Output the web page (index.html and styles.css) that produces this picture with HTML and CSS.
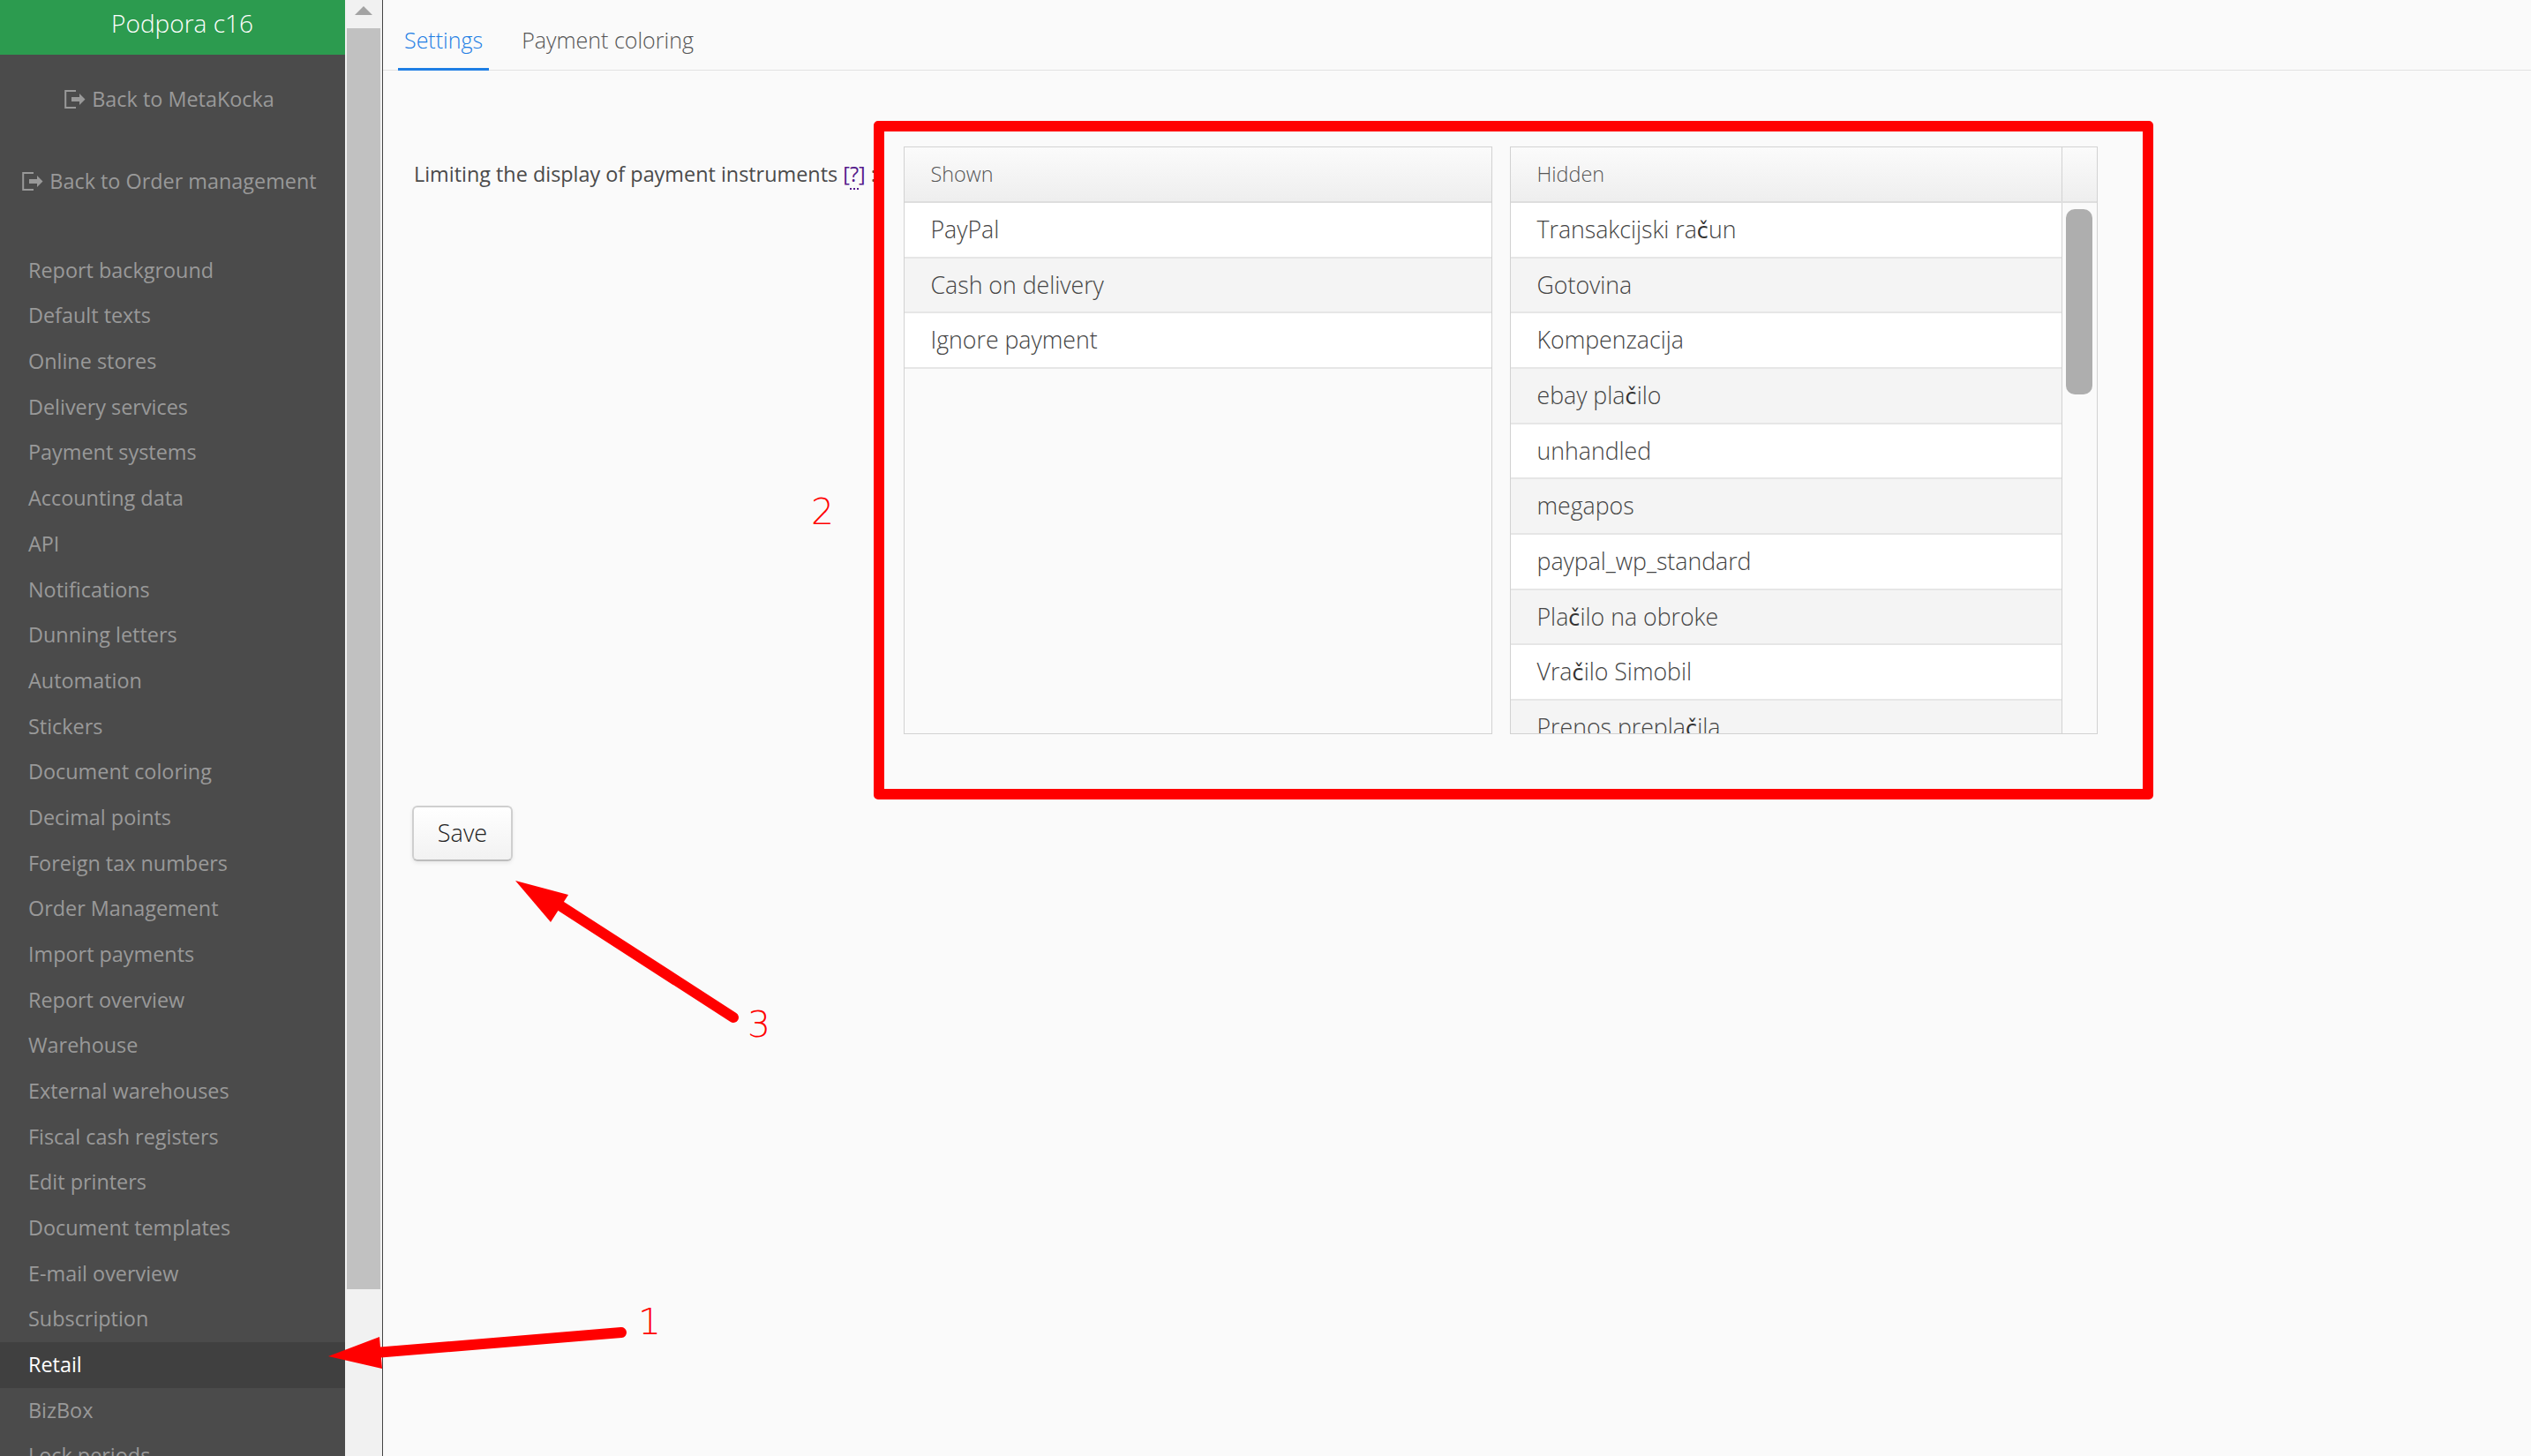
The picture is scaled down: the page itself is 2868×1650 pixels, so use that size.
FILE: index.html
```html
<!DOCTYPE html>
<html lang="en">
<head>
<meta charset="utf-8">
<title>Retail settings</title>
<link rel="stylesheet" href="styles.css">
</head>
<body>
<div class="app">
  <aside class="sidebar">
    <div class="brand">Podpora c16</div>
    <a class="back first"><svg class="back-icon" viewBox="0 0 24 21"><path d="M13 1H1.2V20H13" fill="none" stroke="#999" stroke-width="2"/><path d="M8 8H17V4L23.5 10.5L17 17V13H8Z" fill="#999"/></svg>Back to MetaKocka</a>
    <a class="back"><svg class="back-icon" viewBox="0 0 24 21"><path d="M13 1H1.2V20H13" fill="none" stroke="#999" stroke-width="2"/><path d="M8 8H17V4L23.5 10.5L17 17V13H8Z" fill="#999"/></svg>Back to Order management</a>
    <nav class="nav">
      <a>Report background</a>
      <a>Default texts</a>
      <a>Online stores</a>
      <a>Delivery services</a>
      <a>Payment systems</a>
      <a>Accounting data</a>
      <a>API</a>
      <a>Notifications</a>
      <a>Dunning letters</a>
      <a>Automation</a>
      <a>Stickers</a>
      <a>Document coloring</a>
      <a>Decimal points</a>
      <a>Foreign tax numbers</a>
      <a>Order Management</a>
      <a>Import payments</a>
      <a>Report overview</a>
      <a>Warehouse</a>
      <a>External warehouses</a>
      <a>Fiscal cash registers</a>
      <a>Edit printers</a>
      <a>Document templates</a>
      <a>E-mail overview</a>
      <a>Subscription</a>
      <a class="active">Retail</a>
      <a>BizBox</a>
      <a>Lock periods</a>
    </nav>
  </aside>
  <div class="side-scroll">
    <span class="side-arrow"></span>
    <div class="side-thumb"></div>
  </div>
  <main class="main">
    <div class="tabs">
      <a class="tab current">Settings</a>
      <a class="tab">Payment coloring</a>
    </div>
    <div class="form-row">
      <div class="form-label">Limiting the display of payment instruments <a class="help">[<span class="help-q">?</span>]</a> :</div>
      <div class="lists">
        <section class="list shown">
          <header class="list-head"><div class="head-title">Shown</div></header>
          <div class="list-body">
            <div class="rows">
              <div class="row">PayPal</div>
              <div class="row">Cash on delivery</div>
              <div class="row">Ignore payment</div>
            </div>
          </div>
        </section>
        <section class="list hidden-list">
          <header class="list-head"><div class="head-title">Hidden</div><div class="head-corner"></div></header>
          <div class="list-body">
            <div class="rows">
              <div class="row">Transakcijski ra<span class="fb">č</span>un</div>
              <div class="row">Gotovina</div>
              <div class="row">Kompenzacija</div>
              <div class="row">ebay pla<span class="fb">č</span>ilo</div>
              <div class="row">unhandled</div>
              <div class="row">megapos</div>
              <div class="row">paypal_wp_standard</div>
              <div class="row">Pla<span class="fb">č</span>ilo na obroke</div>
              <div class="row">Vra<span class="fb">č</span>ilo Simobil</div>
              <div class="row">Prenos prepla<span class="fb">č</span>ila</div>
            </div>
            <div class="gutter"><div class="gutter-thumb"></div></div>
          </div>
        </section>
      </div>
    </div>
    <button class="save">Save</button>
  </main>
</div>
<div class="annotations">
  <div class="red-box"></div>
  <svg class="arrows" viewBox="0 0 2868 1650">
    <line x1="704" y1="1510" x2="425" y2="1533" stroke="#f00" stroke-width="12" stroke-linecap="round"/>
    <polygon points="372,1537 430,1515 433,1551" fill="#f00"/>
    <line x1="831" y1="1153" x2="628" y2="1022" stroke="#f00" stroke-width="12" stroke-linecap="round"/>
    <polygon points="584,998 644,1014 624,1045" fill="#f00"/>
  </svg>
  <span class="num num1">1</span>
  <span class="num num2">2</span>
  <span class="num num3">3</span>
</div>
</body>
</html>
```
FILE: styles.css
```css
* { box-sizing: border-box; }
html, body { margin: 0; height: 100%; overflow: hidden; }
body { font-family: "Open Sans", "Liberation Sans", sans-serif; background: #fafafa; color: #444; position: relative; }

.app { display: flex; height: 1650px; overflow: hidden; }

.sidebar { width: 391px; flex: none; background: #4b4b4b; color: #999; font-size: 23.4px; overflow: hidden; }
.brand { height: 62px; background: #2c9b4f; color: #fff; font-size: 28px; font-weight: 300; line-height: 52px; text-align: center; padding-left: 22px; }
.back { display: flex; align-items: center; justify-content: center; height: 93px; padding-right: 7px; }
.back.first { margin-top: 3.5px; }
.back-icon { width: 24px; height: 21px; margin-right: 7px; flex: none; }
.nav { margin-top: 29.3px; }
.nav a { display: block; height: 51.68px; line-height: 51.68px; padding-left: 32px; white-space: nowrap; }
.nav a.active { background: #404040; color: #fff; }

.side-scroll { width: 43px; flex: none; background: #f1f1f1; border-right: 1px solid #444; padding: 32px 2px 0; position: relative; }
.side-thumb { width: 38px; height: 1429px; background: #c1c1c1; }
.side-arrow { position: absolute; left: 11px; top: 7px; width: 0; height: 0; border-left: 10px solid transparent; border-right: 10px solid transparent; border-bottom: 10px solid #a3a3a3; }

.main { flex: 1; min-width: 0; background: #fafafa; }
.tabs { display: flex; height: 80px; border-bottom: 1px solid #e2e2e2; padding-left: 17px; }
.tab { height: 80px; padding: 0 7px; margin-right: 30px; font-size: 25px; font-weight: 300; color: #555; line-height: 91px; }
.tab.current { color: #1e7ee4; border-bottom: 3px solid #1e7ee4; }

.form-row { display: flex; padding: 86px 0 0 35px; }
.form-label { width: 555px; flex: none; font-size: 23.4px; line-height: 34px; padding-top: 14px; white-space: nowrap; color: #4a4a4a; }
.help { color: #551a8b; }
.help-q { border-bottom: 2px dotted #551a8b; }

.lists { display: flex; gap: 20px; height: 666px; }
.list { height: 666px; border: 1px solid #d2d2d2; display: flex; flex-direction: column; overflow: hidden; }
.shown { width: 667px; }
.hidden-list { width: 666px; }
.list-head { display: flex; height: 63px; flex: none; background: linear-gradient(#fbfbfb, #eeeeee); border-bottom: 2px solid #dedede; }
.head-title { flex: 1; padding-left: 29.5px; font-size: 23.4px; font-weight: 300; line-height: 60px; color: #555; }
.head-corner { width: 40px; border-left: 1px solid #d2d2d2; }
.list-body { flex: 1; min-height: 0; display: flex; }
.rows { flex: 1; min-width: 0; }
.row { height: 62.67px; line-height: 59px; padding-left: 29.5px; font-size: 26.7px; font-weight: 300; color: #444; background: #fff; border-bottom: 2px solid #e6e6e6; white-space: nowrap; }
.row:nth-child(even) { background: #f4f4f4; }
.fb { font-family: "DejaVu Sans", sans-serif; font-weight: 400; font-size: 24px; color: #333; }
.gutter { width: 40px; flex: none; border-left: 1px solid #d2d2d2; padding: 7px 0 0 4px; }
.gutter-thumb { width: 30px; height: 210px; background: #aeaeae; border-radius: 10px; }

.save { display: block; width: 114px; height: 63px; margin: 81px 0 0 33px; padding: 0 0 2px; font-family: inherit; font-size: 27px; font-weight: 300; color: #222; background: linear-gradient(#ffffff, #f2f2f2); border: 2px solid #cfcfcf; border-bottom-color: #bdbdbd; border-radius: 6px; box-shadow: 0 2px 4px rgba(0,0,0,.08); }

.annotations { position: absolute; left: 0; top: 0; width: 2868px; height: 1650px; pointer-events: none; }
.arrows { position: absolute; left: 0; top: 0; width: 2868px; height: 1650px; }
.red-box { position: absolute; left: 990px; top: 137px; width: 1450px; height: 769px; border: 12px solid #f00; border-radius: 5px; }
.num { position: absolute; color: #f00; font-family: "DejaVu Sans", sans-serif; font-weight: 200; font-size: 41px; line-height: 42px; }
.num1 { left: 723px; top: 1477px; }
.num2 { left: 919px; top: 559px; }
.num3 { left: 847px; top: 1140px; }
```
